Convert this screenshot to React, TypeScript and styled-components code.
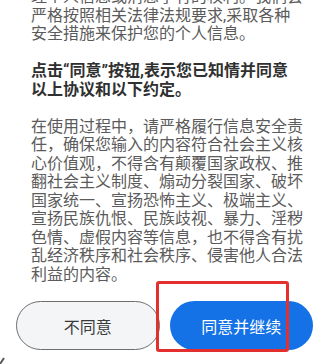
import React from 'react'
import styled, { createGlobalStyle } from 'styled-components'

const GlobalStyle = createGlobalStyle`
  html, body {
    margin: 0;
    padding: 0;
    background: #ffffff;
  }
  body {
    font-family: Roboto, "Noto Sans CJK SC", sans-serif;
    overflow: hidden;
  }
`

const Screen = styled.div`
  position: relative;
  width: 325px;
  height: 364px;
  overflow: hidden;
  background: #ffffff;
`

const Body = styled.div`
  margin-top: -11.75px;
  padding: 0 21px 0 31px;
  font-size: 16px;
  line-height: 18.5px;
  color: #5b5b5b;
`

const Paragraph = styled.p<{ $strong?: boolean }>`
  margin: 0 0 18.5px;
  font-weight: ${({ $strong }) => ($strong ? 700 : 400)};
  color: ${({ $strong }) => ($strong ? '#303030' : '#5b5b5b')};
  &:last-child {
    margin-bottom: 0;
  }
`

const Actions = styled.div`
  display: grid;
  grid-template-columns: 1fr 1fr;
  gap: 10px;
  margin-top: 16.75px;
  padding: 0 12px 0 16px;
`

const Button = styled.button<{ $primary?: boolean }>`
  height: 49px;
  border-radius: 25px;
  font-family: inherit;
  font-size: 16px;
  cursor: pointer;
  border: ${({ $primary }) => ($primary ? 'none' : '1px solid #6e6e6e')};
  background: ${({ $primary }) => ($primary ? '#1472e6' : '#f4f5f7')};
  color: ${({ $primary }) => ($primary ? '#ffffff' : '#3a3a3a')};
`

const Highlight = styled.div`
  position: absolute;
  left: 156px;
  top: 281px;
  width: 133px;
  height: 71px;
  box-sizing: border-box;
  border: 3px solid #e3302f;
  border-radius: 3px;
  pointer-events: none;
`

const CornerMark = styled.svg`
  position: absolute;
  left: 0;
  bottom: 0;
`

export default function App() {
  return (
    <>
      <GlobalStyle />
      <Screen>
        <Body>
          <Paragraph>
            理个人信息或消息享有的权利。我们会严格按照相关法律法规要求,采取各种安全措施来保护您的个人信息。
          </Paragraph>
          <Paragraph $strong>
            点击“同意”按钮,表示您已知情并同意
            <br />
            以上协议和以下约定。
          </Paragraph>
          <Paragraph>
            在使用过程中，请严格履行信息安全责任，确保您输入的内容符合社会主义核心价值观，不得含有颠覆国家政权、推翻社会主义制度、煽动分裂国家、破坏国家统一、宣扬恐怖主义、极端主义、宣扬民族仇恨、民族歧视、暴力、淫秽色情、虚假内容等信息，也不得含有扰乱经济秩序和社会秩序、侵害他人合法利益的内容。
          </Paragraph>
        </Body>
        <Actions>
          <Button>不同意</Button>
          <Button $primary>同意并继续</Button>
        </Actions>
        <Highlight />
        <CornerMark width="8" height="8" viewBox="0 0 8 8">
          <path d="M0 8 L4 2" stroke="#555" strokeWidth="2" fill="none" />
        </CornerMark>
      </Screen>
    </>
  )
}
